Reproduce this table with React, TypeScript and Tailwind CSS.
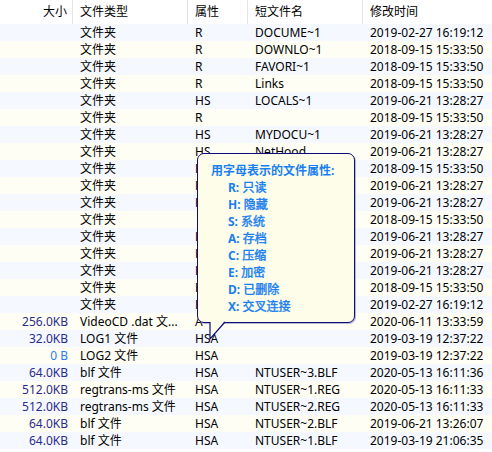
import React from "react";

type Row = {
  size?: string;
  sizeLight?: boolean;
  type: string;
  attr: string;
  short: string;
  time: string;
};

const rows: Row[] = [
  { type: "文件夹", attr: "R", short: "DOCUME~1", time: "2019-02-27 16:19:12" },
  { type: "文件夹", attr: "R", short: "DOWNLO~1", time: "2018-09-15 15:33:50" },
  { type: "文件夹", attr: "R", short: "FAVORI~1", time: "2018-09-15 15:33:50" },
  { type: "文件夹", attr: "R", short: "Links", time: "2018-09-15 15:33:50" },
  { type: "文件夹", attr: "HS", short: "LOCALS~1", time: "2019-06-21 13:28:27" },
  { type: "文件夹", attr: "R", short: "", time: "2018-09-15 15:33:50" },
  { type: "文件夹", attr: "HS", short: "MYDOCU~1", time: "2019-06-21 13:28:27" },
  { type: "文件夹", attr: "HS", short: "NetHood", time: "2019-06-21 13:28:27" },
  // 以下几行的短文件名被提示气泡挡住
  { type: "文件夹", attr: "R", short: "", time: "2018-09-15 15:33:50" },
  { type: "文件夹", attr: "HS", short: "", time: "2019-06-21 13:28:27" },
  { type: "文件夹", attr: "HS", short: "", time: "2019-06-21 13:28:27" },
  { type: "文件夹", attr: "", short: "", time: "2018-09-15 15:33:50" },
  { type: "文件夹", attr: "HS", short: "", time: "2019-06-21 13:28:27" },
  { type: "文件夹", attr: "HS", short: "", time: "2019-06-21 13:28:27" },
  { type: "文件夹", attr: "HS", short: "", time: "2019-06-21 13:28:27" },
  { type: "文件夹", attr: "R", short: "", time: "2018-09-15 15:33:50" },
  { type: "文件夹", attr: "HS", short: "", time: "2019-02-27 16:19:12" },
  { size: "256.0KB", type: "VideoCD .dat 文...", attr: "A", short: "", time: "2020-06-11 13:33:59" },
  { size: "32.0KB", type: "LOG1 文件", attr: "HSA", short: "", time: "2019-03-19 12:37:22" },
  { size: "0 B", sizeLight: true, type: "LOG2 文件", attr: "HSA", short: "", time: "2019-03-19 12:37:22" },
  { size: "64.0KB", type: "blf 文件", attr: "HSA", short: "NTUSER~3.BLF", time: "2020-05-13 16:11:36" },
  { size: "512.0KB", type: "regtrans-ms 文件", attr: "HSA", short: "NTUSER~1.REG", time: "2020-05-13 16:11:33" },
  { size: "512.0KB", type: "regtrans-ms 文件", attr: "HSA", short: "NTUSER~2.REG", time: "2020-05-13 16:11:33" },
  { size: "64.0KB", type: "blf 文件", attr: "HSA", short: "NTUSER~2.BLF", time: "2019-06-21 13:26:07" },
  { size: "64.0KB", type: "blf 文件", attr: "HSA", short: "NTUSER~1.BLF", time: "2019-03-19 21:06:35" },
];

const legend = [
  ["R:", "只读"],
  ["H:", "隐藏"],
  ["S:", "系统"],
  ["A:", "存档"],
  ["C:", "压缩"],
  ["E:", "加密"],
  ["D:", "已删除"],
  ["X:", "交叉连接"],
];

function HeaderCell({ label, className }: { label: string; className: string }) {
  return (
    <div className={`flex h-full items-center border-r border-[#e5e5e5] ${className}`}>
      {label}
    </div>
  );
}

// 属性提示气泡：浮在列表上方，带左下角的小尾巴
function AttrTooltip() {
  return (
    <div className="absolute left-[197px] top-[153px]">
      <div className="h-[170px] w-[158px] rounded-[7px] border border-[#0c0c7a] bg-[#fdfdea] pl-[13px] pt-[8px] text-[12px] font-bold leading-[17px] text-[#1a7ff0] shadow-[1px_1px_0_#b8b8d0]">
        <div>用字母表示的文件属性:</div>
        <div className="pl-[17px]">
          {legend.map(([k, v]) => (
            <div key={k}>
              {k} <span className="font-normal [-webkit-text-stroke:0.4px_#1a7ff0]">{v}</span>
            </div>
          ))}
        </div>
      </div>
      <svg className="absolute left-[12px] top-[168px]" width="18" height="20" viewBox="0 0 18 20">
        <polygon points="1,0 1,18 16,0" fill="#fdfdea" />
        <polyline points="1,1 1,18 16,1" fill="none" stroke="#0c0c7a" strokeWidth="1.2" />
      </svg>
    </div>
  );
}

export default function App() {
  return (
    <div
      className="relative h-[452px] w-[492px] overflow-hidden bg-white text-[12px] text-black"
      style={{ fontFamily: '"Noto Sans", "Noto Sans CJK SC", sans-serif' }}
    >
      <div className="flex h-[24px]">
        <HeaderCell label="大小" className="w-[73px] justify-end pr-[5px]" />
        <HeaderCell label="文件类型" className="w-[115px] pl-[7px]" />
        <HeaderCell label="属性" className="w-[60px] pl-[7px]" />
        <HeaderCell label="短文件名" className="w-[115px] pl-[7px]" />
        <div className="flex flex-1 items-center pl-[7px]">修改时间</div>
      </div>

      {rows.map((r, i) => (
        <div
          key={i}
          className={`flex h-[17px] items-center whitespace-nowrap leading-[17px] ${
            i % 2 === 0 ? "bg-[#f5f9ff]" : "bg-[#fefef4]"
          }`}
        >
          <div
            className={`w-[73px] pr-[5px] text-right ${r.sizeLight ? "text-[#2f7cf0]" : "text-[#2b2b8c]"}`}
          >
            {r.size}
          </div>
          <div className="w-[115px] pl-[7px]">{r.type}</div>
          <div className="w-[60px] pl-[7px]">{r.attr}</div>
          <div className="w-[115px] pl-[7px]">{r.short}</div>
          <div className="flex-1 pl-[7px]">{r.time}</div>
        </div>
      ))}

      <AttrTooltip />
    </div>
  );
}
